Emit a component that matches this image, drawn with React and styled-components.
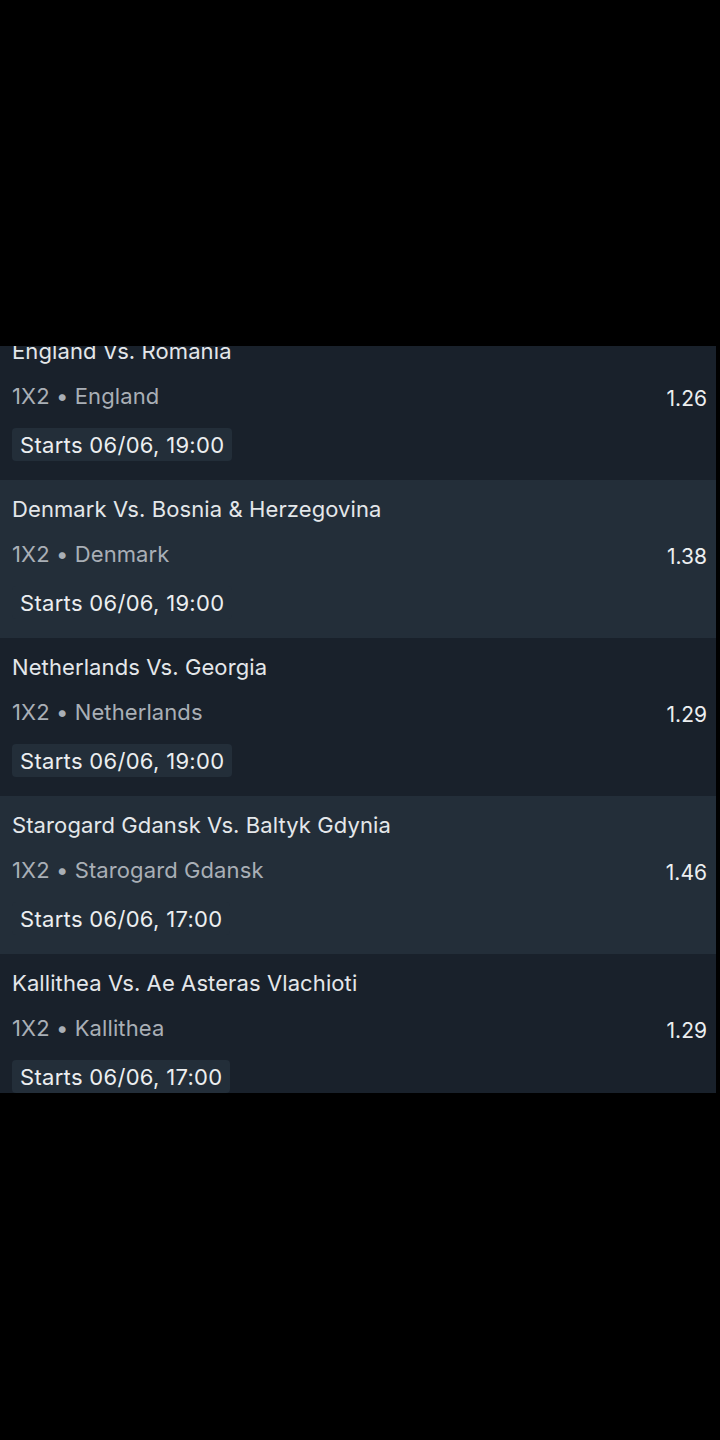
import React from 'react';
import styled, { createGlobalStyle } from 'styled-components';

const GlobalStyle = createGlobalStyle`
  html, body {
    margin: 0;
    padding: 0;
    background: #000;
  }
  body {
    font-family: Inter, "Noto Sans", sans-serif;
    -webkit-font-smoothing: antialiased;
  }
`;

const Page = styled.div`
  width: 720px;
  height: 1440px;
  background: #000;
  padding-top: 346px;
  box-sizing: border-box;
`;

const Panel = styled.section`
  width: 716px;
  height: 747px;
  overflow: hidden;
`;

const List = styled.ul`
  list-style: none;
  margin: -24px 0 0;
  padding: 0;
`;

const Row = styled.li`
  height: 158px;
  box-sizing: border-box;
  padding: 16px 9px 0 12px;
  display: flex;
  justify-content: space-between;
  background: ${p => (p.$alt ? '#232e39' : '#19212b')};
`;

const Info = styled.div`
  display: flex;
  flex-direction: column;
  align-items: flex-start;
`;

const Title = styled.div`
  font-size: 22px;
  line-height: 26px;
  color: #e4e7ea;
  font-weight: 420;
  letter-spacing: 0.1px;
`;

const Market = styled.div`
  margin-top: 19px;
  font-size: 22px;
  line-height: 26px;
  color: #a9afb6;
  letter-spacing: 0.1px;
`;

const Starts = styled.div`
  margin-top: 19px;
  height: 33px;
  padding: 0 8px;
  display: flex;
  align-items: center;
  border-radius: 4px;
  font-size: 22px;
  color: #eceef0;
  font-weight: 420;
  letter-spacing: 0.3px;
  background: #232e39;
`;

const Odds = styled.div`
  margin-top: 48px;
  font-size: 21px;
  line-height: 26px;
  color: #eceef0;
  font-weight: 420;
`;

const bets = [
  { match: 'England Vs. Romania', pick: 'England', odds: '1.26', time: '19:00' },
  { match: 'Denmark Vs. Bosnia & Herzegovina', pick: 'Denmark', odds: '1.38', time: '19:00' },
  { match: 'Netherlands Vs. Georgia', pick: 'Netherlands', odds: '1.29', time: '19:00' },
  { match: 'Starogard Gdansk Vs. Baltyk Gdynia', pick: 'Starogard Gdansk', odds: '1.46', time: '17:00' },
  { match: 'Kallithea Vs. Ae Asteras Vlachioti', pick: 'Kallithea', odds: '1.29', time: '17:00' },
];

export default function App() {
  return (
    <Page>
      <GlobalStyle />
      <Panel>
        <List>
          {bets.map((b, i) => (
            <Row key={b.match} $alt={i % 2 === 1}>
              <Info>
                <Title>{b.match}</Title>
                <Market>1X2 • {b.pick}</Market>
                <Starts>Starts 06/06, {b.time}</Starts>
              </Info>
              <Odds>{b.odds}</Odds>
            </Row>
          ))}
        </List>
      </Panel>
    </Page>
  );
}
